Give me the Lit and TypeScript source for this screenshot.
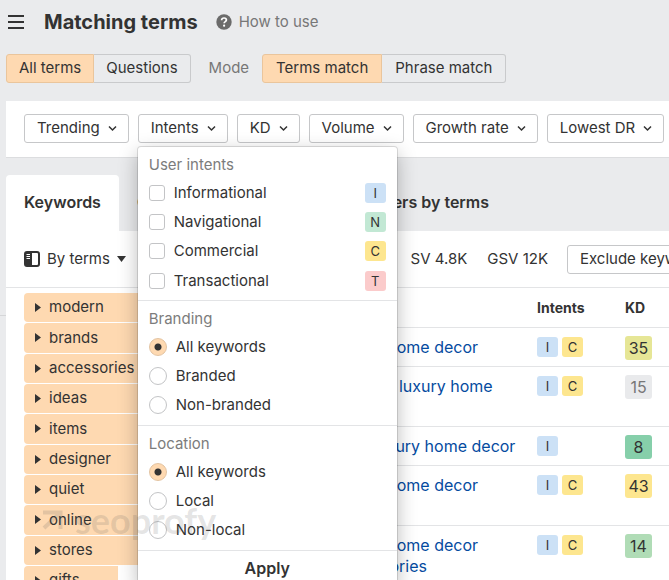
import { LitElement, html, css, svg, nothing } from "lit";
import { customElement, property } from "lit/decorators.js";
import { classMap } from "lit/directives/class-map.js";

type Intent = "I" | "N" | "C" | "T";

const FILTERS = ["Trending", "Intents", "KD", "Volume", "Growth rate", "Lowest DR"];

const USER_INTENTS: [string, Intent][] = [
  ["Informational", "I"],
  ["Navigational", "N"],
  ["Commercial", "C"],
  ["Transactional", "T"],
];

const TERMS = ["modern", "brands", "accessories", "ideas", "items", "designer", "quiet", "online", "stores", "gifts"];

const ROWS: { keyword: string; intents: Intent[]; kd: number; level: string }[] = [
  { keyword: "luxury home decor", intents: ["I", "C"], kd: 35, level: "medium" },
  { keyword: "modern luxury home decor", intents: ["I", "C"], kd: 15, level: "muted" },
  { keyword: "best luxury home decor", intents: ["I"], kd: 8, level: "easy" },
  { keyword: "luxury home decor brands", intents: ["I", "C"], kd: 43, level: "hard" },
  { keyword: "luxury home decor accessories", intents: ["I", "C"], kd: 14, level: "low" },
];

const chevron = svg`<svg width="9" height="8" viewBox="0 0 9 8" aria-hidden="true"><path d="M1 2.500 4.500 6 8 2.500" fill="none" stroke="#333" stroke-width="1.500"/></svg>`;

@customElement("intent-badge")
export class IntentBadge extends LitElement {
  @property() kind: Intent = "I";

  static styles = css`
    :host { display: inline-block; }
    .badge { display: block; width: 21px; border-radius: 3px; font-size: 13px; line-height: 20px; text-align: center; color: #333; }
    .I { background: #cce1f6; }
    .N { background: #c2e8d4; }
    .C { background: #fde68f; }
    .T { background: #fbcbcb; }
  `;

  render() {
    return html`<span class="badge ${this.kind}">${this.kind}</span>`;
  }
}

@customElement("intents-menu")
export class IntentsMenu extends LitElement {
  static styles = css`
    :host { display: block; box-sizing: border-box; background: #fff; border-radius: 3px; box-shadow: 0 0 0 1px rgba(0, 0, 0, 0.12), 0 6px 20px rgba(0, 0, 0, 0.28); }
    fieldset { margin: 0; border: 0; border-bottom: 1px solid #e3e4e6; padding: 5px 11px; min-width: 0; }
    legend { float: left; width: 100%; padding: 0; color: #7c7c7c; font-size: 15px; line-height: 26px; }
    .options { clear: both; display: grid; grid-auto-rows: 29px 29px 30px 29px; }
    .option { display: flex; align-items: center; gap: 9px; font-size: 15px; }
    .name { flex: 1; }
    input { appearance: none; box-sizing: border-box; margin: 0; width: 16px; height: 16px; border: 1px solid #c3c4c6; border-radius: 3px; background: #fff; }
    input[type="radio"] { width: 18px; height: 18px; border-radius: 50%; }
    input[type="radio"]:checked { border-color: #e3c3a0; background: radial-gradient(circle, #333 0 3px, #fed9b1 4px); }
    .apply { display: block; width: 100%; border: 0; padding: 0; background: none; color: #333; font: 600 16px/34px Inter, sans-serif; }
  `;

  private radios(title: string, group: string, names: string[]) {
    return html`<fieldset>
      <legend>${title}</legend>
      <div class="options">
        ${names.map((n, i) => html`<label class="option"><input type="radio" name=${group} ?checked=${i === 0} /><span class="name">${n}</span></label>`)}
      </div>
    </fieldset>`;
  }

  render() {
    return html`
      <fieldset>
        <legend>User intents</legend>
        <div class="options">
          ${USER_INTENTS.map(([name, kind]) => html`<label class="option"><input type="checkbox" /><span class="name">${name}</span><intent-badge kind=${kind}></intent-badge></label>`)}
        </div>
      </fieldset>
      ${this.radios("Branding", "branding", ["All keywords", "Branded", "Non-branded"])}
      ${this.radios("Location", "location", ["All keywords", "Local", "Non-local"])}
      <button class="apply">Apply</button>
    `;
  }
}

@customElement("app-root")
export class AppRoot extends LitElement {
  static styles = css`
    :host { display: block; position: relative; height: 100vh; overflow: hidden; background: #eaebed; color: #333; font: 15px/20px Inter, sans-serif; }
    button { font: inherit; color: inherit; margin: 0; white-space: nowrap; }
    svg { display: block; flex: none; }
    a { color: #054b9f; text-decoration: none; }

    .top { display: flex; align-items: center; padding: 7px 8px 1px; height: 30px; }
    .burger { border: 0; padding: 0; background: none; }
    h1 { margin: 0 18px 0 20px; font-size: 20px; line-height: 30px; font-weight: 700; }
    .help { display: flex; align-items: center; gap: 7px; color: #777; }

    .modes { display: flex; align-items: center; padding: 16px 6px 18px; }
    .segment { display: flex; }
    .segment button { height: 29px; padding: 0 12px 2px; border: 1px solid #c9cacc; background: none; }
    .segment.wide button { padding: 0 13px 2px; }
    .segment button + button { border-left: 0; border-radius: 0 3px 3px 0; }
    .segment .on { border-color: #eac59c; border-radius: 3px 0 0 3px; background: #fed9b1; }
    .mode { margin: 0 13px 0 18px; padding-bottom: 2px; color: #777; }

    .filters { display: flex; gap: 9px; margin-left: 6px; padding: 13px 18px 14px; background: #fff; border-bottom: 1px solid #dcdddf; }
    .filter { position: relative; }
    .box { display: flex; align-items: center; gap: 8px; height: 29px; padding: 0 11px 1px 12px; border: 1px solid #c6c7c9; border-radius: 3px; background: #fff; }
    .menu { position: absolute; z-index: 2; top: 33px; left: 0; width: 259px; }

    .tabs { display: flex; margin: 17px 0 0 6px; }
    .tab { border: 0; padding: 0 18px 2px; background: none; font-size: 16px; font-weight: 600; line-height: 54px; }
    .tab + .tab { padding: 0 9px 2px 18px; }
    .tab.on { background: #fff; border-radius: 4px 4px 0 0; }

    .panel { position: relative; margin-left: 6px; background: #fff; }
    .panel::before { content: ""; position: absolute; top: 84px; left: -6px; width: 6px; height: 1px; background: #d5d6d8; }
    .tools { display: flex; align-items: center; padding: 14px 0 13px 18px; border-bottom: 1px solid #e3e4e6; }
    .group { display: flex; align-items: center; gap: 7px; border: 0; padding: 0 0 1px; background: none; }
    .stats { display: flex; flex: 1; justify-content: flex-end; gap: 20px; padding: 0 19px 1px 0; white-space: nowrap; }
    .exclude { flex: 0 0 102px; overflow: hidden; }
    .exclude .box { width: 160px; }

    .split { display: flex; align-items: flex-start; }
    .terms { flex: 0 0 250px; box-sizing: border-box; display: grid; grid-auto-rows: 29px 30px 29px; gap: 1px; margin: 0; padding: 5px 0 0 18px; list-style: none; }
    .term { display: flex; align-items: center; gap: 8px; width: 100%; height: 100%; padding: 0 0 1px 11px; border: 0; border-radius: 4px; background: #fed9b1; }
    .term.short { width: 94px; border-radius: 4px 0 0 4px; }

    table { flex: 1; border-collapse: collapse; table-layout: fixed; width: 0; font-size: 16px; line-height: 21px; }
    th { padding: 9px 0; border-bottom: 1px solid #e3e4e6; font-size: 14px; font-weight: 700; text-align: left; }
    td { padding: 9px 0 8px; border-bottom: 1px solid #e3e4e6; vertical-align: top; }
    .c-key { width: 281px; }
    .c-int { width: 88px; }
    .word { padding-left: 80px; padding-right: 12px; }
    .badges { display: flex; gap: 4px; }
    .kd { display: block; width: 27px; margin: -1px 0 -3px; border-radius: 3px; line-height: 24px; text-align: center; }
    .medium { background: #e6e696; }
    .muted { background: #e9eaec; color: #777; }
    .easy { background: #86cfaa; }
    .hard { background: #fde68f; }
    .low { background: #b0dcb6; }

    .mark { position: absolute; z-index: 3; top: 500px; left: 42px; display: flex; align-items: center; gap: 12px; color: rgba(90, 90, 90, 0.17); font: 700 36px/40px Lato, sans-serif; pointer-events: none; }
  `;

  render() {
    return html`
      <header class="top">
        <button class="burger" aria-label="Menu">
          <svg width="16" height="14" viewBox="0 0 16 14"><path d="M0 1h16M0 7h16M0 13h16" stroke="#333" stroke-width="2"/></svg>
        </button>
        <h1>Matching terms</h1>
        <a class="help" href="#help">
          <svg width="16" height="16" viewBox="0 0 16 16" aria-hidden="true"><circle cx="8" cy="8" r="7.700" fill="#6b6b6b"/><path d="M5.600 6.300C5.600 4.800 6.600 4 8 4s2.400.8 2.400 2.100C10.400 7.600 8.100 7.600 8.100 9.300" fill="none" stroke="#fff" stroke-width="1.700"/><circle cx="8.100" cy="11.700" r="1.100" fill="#fff"/></svg>
          How to use
        </a>
      </header>

      <div class="modes">
        <div class="segment"><button class="on">All terms</button><button>Questions</button></div>
        <span class="mode">Mode</span>
        <div class="segment wide"><button class="on">Terms match</button><button>Phrase match</button></div>
      </div>

      <section class="filters">
        ${FILTERS.map((name) => html`<div class="filter">
          <button class="box">${name}${chevron}</button>
          ${name === "Intents" ? html`<intents-menu class="menu"></intents-menu>` : nothing}
        </div>`)}
      </section>

      <nav class="tabs">
        <button class="tab on">Keywords</button>
        <button class="tab">Clusters by Parent Topic</button>
        <button class="tab">Clusters by terms</button>
      </nav>

      <main class="panel">
        <div class="tools">
          <button class="group">
            <svg width="16" height="16" viewBox="0 0 16 16" aria-hidden="true"><rect x="1" y="1" width="14" height="14" rx="2" fill="#fff" stroke="#333" stroke-width="2"/><path d="M1 1h7v14H1z" fill="#333"/><path d="M2.500 3.500h3.500M2.500 5.500h3.500M2.500 7.500h3.500" stroke="#fff"/></svg>
            By terms
            <svg width="9" height="6" viewBox="0 0 9 6" aria-hidden="true"><path d="M0 0h9L4.500 6z" fill="#333"/></svg>
          </button>
          <div class="stats"><span>SV 4.8K</span><span>GSV 12K</span></div>
          <div class="exclude"><button class="box">Exclude keywords</button></div>
        </div>

        <div class="split">
          <ul class="terms">
            ${TERMS.map((t) => html`<li><button class=${classMap({ term: true, short: t === "gifts" })}>
              <svg width="6" height="9" viewBox="0 0 6 9" aria-hidden="true"><path d="M0 0v9l6-4.500z" fill="#333"/></svg>${t}
            </button></li>`)}
          </ul>
          <table>
            <colgroup><col class="c-key" /><col class="c-int" /><col /></colgroup>
            <thead><tr><th class="word">Keyword</th><th>Intents</th><th>KD</th></tr></thead>
            <tbody>
              ${ROWS.map((r) => html`<tr>
                <td class="word"><a href="#keyword">${r.keyword}</a></td>
                <td><div class="badges">${r.intents.map((k) => html`<intent-badge kind=${k}></intent-badge>`)}</div></td>
                <td><span class="kd ${r.level}">${r.kd}</span></td>
              </tr>`)}
            </tbody>
          </table>
        </div>
      </main>

      <div class="mark">
        <svg width="21" height="20" viewBox="0 0 21 20" aria-hidden="true"><path d="M1 2.500h17.500V19M17.500 3.500 2 18" fill="none" stroke="currentColor" stroke-width="4"/></svg>
        seoprofy
      </div>
    `;
  }
}
